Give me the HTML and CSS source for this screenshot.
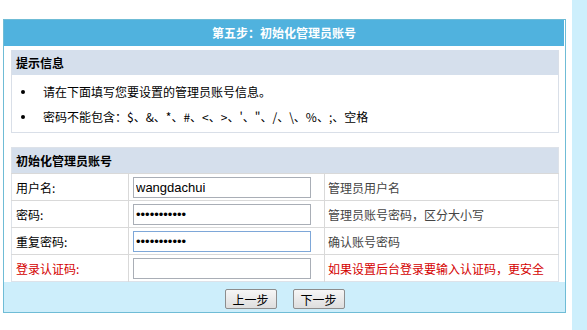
FILE: index.html
```html
<!DOCTYPE html>
<html lang="zh-CN">
<head>
    <meta charset="UTF-8">
    <title>初始化管理员账号</title>
    <link rel="stylesheet" href="styles.css">
</head>
<body>
    <div class="main">
        <div class="box">
            <div class="box-title">第五步：初始化管理员账号</div>
            <div class="box-body">
                <div class="tips">
                    <div class="tips-head">提示信息</div>
                    <ul>
                        <li>请在下面填写您要设置的管理员账号信息。</li>
                        <li>密码不能包含：$、&amp;、*、#、&lt;、&gt;、'、"、/、\、%、;、空格</li>
                    </ul>
                </div>
                <table class="form">
                    <tr>
                        <th colspan="3">初始化管理员账号</th>
                    </tr>
                    <tr>
                        <td class="label">用户名:</td>
                        <td class="field"><input type="text" value="wangdachui"></td>
                        <td class="desc">管理员用户名</td>
                    </tr>
                    <tr>
                        <td class="label">密码:</td>
                        <td class="field"><input type="password" value="12345678901"></td>
                        <td class="desc">管理员账号密码，区分大小写</td>
                    </tr>
                    <tr>
                        <td class="label">重复密码:</td>
                        <td class="field"><input type="password" class="focus" value="12345678901"></td>
                        <td class="desc">确认账号密码</td>
                    </tr>
                    <tr class="red">
                        <td class="label">登录认证码:</td>
                        <td class="field"><input type="text" value=""></td>
                        <td class="desc">如果设置后台登录要输入认证码，更安全</td>
                    </tr>
                </table>
            </div>
            <div class="box-foot">
                <button type="button">上一步</button>
                <button type="button">下一步</button>
            </div>
        </div>
    </div>
    <div class="side"></div>
</body>
</html>
```

FILE: styles.css
```css
body {
    margin: 0;
    padding: 0;
    background-color: #fff;
    color: #000;
    font-family: "Noto Sans CJK SC", "Liberation Sans", sans-serif;
    font-size: 12px;
    display: flex;
    height: 330px;
    overflow: hidden;
}
.main {
    width: 569px;
    padding: 19px 0 0 3px;
}
.side {
    width: 15px;
    background-color: #cdeffc;
    margin-left: auto;
}
.box {
    width: 561px;
    border: 1px solid #6fbcd6;
    background-color: #fff;
}
.box-title {
    height: 26px;
    line-height: 26px;
    margin-right: 1px;
    background-color: #50b2de;
    color: #fff;
    font-weight: bold;
    text-align: center;
}
.box-body {
    padding: 4px 6px 0 7px;
}
.tips {
    border: 1px solid #d9dfe8;
    margin-bottom: 14px;
}
.tips-head {
    height: 25px;
    line-height: 25px;
    margin-top: -1px;
    padding-left: 4px;
    background-color: #d5dfec;
    font-weight: bold;
}
.tips ul {
    margin: 0;
    padding: 4px 0 3px 0;
    list-style: none;
}
.tips li {
    position: relative;
    line-height: 25px;
    padding-left: 31px;
}
.tips li::before {
    content: "";
    position: absolute;
    left: 9px;
    top: 11px;
    width: 4px;
    height: 4px;
    border-radius: 50%;
    background-color: #000;
}
.form {
    width: 548px;
    border-collapse: collapse;
    border: 1px solid #dde2e9;
}
.form th {
    height: 25px;
    padding: 0 0 0 4px;
    background-color: #d5dfec;
    text-align: left;
    font-weight: bold;
}
.form td {
    height: 26px;
    padding: 0;
    border-top: 1px solid #d9d9d9;
}
.form .label {
    width: 112px;
    padding-left: 4px;
}
.form .field {
    width: 191px;
    padding-left: 4px;
    border-left: 1px solid #d9d9d9;
    border-right: 1px solid #d9d9d9;
}
.form .desc {
    padding-left: 3px;
    color: #444;
}
.form .red td {
    color: #d40000;
}
.form input {
    display: block;
    box-sizing: border-box;
    width: 178px;
    height: 21px;
    margin: 0;
    padding: 0 2px;
    border: 1px solid #a9aeb6;
    font-family: "Liberation Sans", sans-serif;
    font-size: 13px;
    color: #000;
    outline: none;
}
.form input.focus {
    border-color: #7ea7d8;
}
.box-foot {
    height: 30px;
    padding-top: 7px;
    box-sizing: border-box;
    background-color: #cdeefb;
    display: flex;
    justify-content: center;
    gap: 16px;
}
.box-foot button {
    width: 52px;
    height: 20px;
    padding: 0;
    border: 1px solid #8d8d8d;
    border-radius: 2px;
    background: linear-gradient(#f6f6f6, #dedede);
    font-family: "Noto Sans CJK SC", sans-serif;
    font-size: 12px;
    color: #000;
}
```
